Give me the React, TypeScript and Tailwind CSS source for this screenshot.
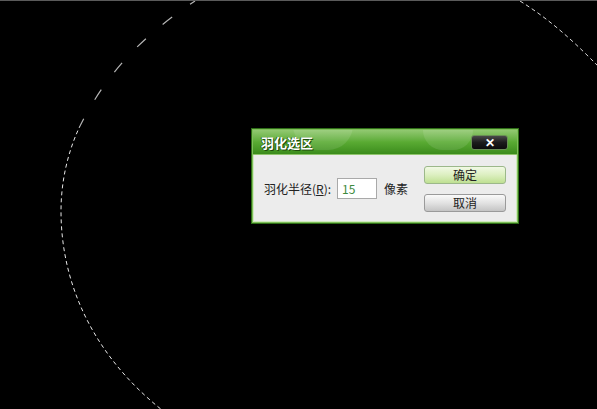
import React from 'react';

const FONT = { fontFamily: '"Noto Sans CJK SC", "Noto Sans", sans-serif' };

export default function App() {
  return (
    <div className="relative h-[409px] w-[597px] overflow-hidden border-t border-[#5a5a5a] bg-black" style={FONT}>
      {/* 选区蚂蚁线 */}
      <svg className="absolute inset-0" width="597" height="409" viewBox="0 0 597 409" fill="none">
        <path d="M 195 432 C 110 380, 61 300, 61 210 C 61 180, 68 150, 80 125" stroke="#e8e8e8" strokeWidth="1" strokeDasharray="4 3" />
        <path d="M 80 125 C 110 65, 150 30, 195 0" stroke="#b5b5b5" strokeWidth="1.2" strokeDasharray="12 22" strokeDashoffset="4" />
        <path d="M 520 0 C 560 25, 590 55, 640 110" stroke="#d8d8d8" strokeWidth="1" strokeDasharray="4 3" />
      </svg>

      {/* 羽化选区 对话框 */}
      <div className="absolute left-[251px] top-[127px] w-[268px] border border-[#2f6f17] bg-[#3f8f22] p-[1px] shadow-[0_0_0_1px_#7fbf5a_inset]">
        <div className="relative flex h-[24px] items-center justify-between overflow-hidden bg-gradient-to-b from-[#92c971] via-[#5aab33] to-[#3b8c1c] pl-[8px] pr-[9px]">
          <div className="absolute left-[40px] top-[-30px] h-[50px] w-[60px] rounded-full bg-white/10" />
          <div className="absolute left-[170px] top-[-20px] h-[40px] w-[50px] rounded-full bg-white/10" />
          <span className="relative text-[13px] font-bold leading-none text-white [text-shadow:1px_1px_0_#1d4d0c,-1px_0_0_#2b5f14]">羽化选区</span>
          <div className="relative flex h-[15px] w-[37px] items-center justify-center rounded-[3px] border border-[#6a8f55] bg-gradient-to-b from-[#4a4a4a] via-[#1c1c1c] to-[#0c0c0c]">
            <span className="text-[12px] font-bold leading-none text-white">✕</span>
          </div>
        </div>
        <div className="flex h-[68px] items-center justify-between border-t border-[#8fc46c] bg-[#ececec] pl-[11px] pr-[11px] shadow-[inset_1px_0_0_#cfe9bd,inset_-1px_0_0_#cfe9bd,inset_0_-1px_0_#cfe9bd]">
          <div className="flex items-center text-[12px] text-[#222]">
            <span>羽化半径(<span className="underline">R</span>):</span>
            <div className="ml-[6px] flex h-[21px] w-[40px] items-center border border-[#a9a9a9] bg-white pl-[4px] text-[12px] text-[#3d8a3d]">15</div>
            <span className="ml-[7px]">像素</span>
          </div>
          <div className="flex flex-col gap-[10px]">
            <button className="flex h-[18px] w-[82px] items-center justify-center rounded-[3px] border border-[#9cb88a] bg-gradient-to-b from-[#f1f9e4] via-[#dcefc0] to-[#bfe092] text-[12px] leading-none text-[#222]">确定</button>
            <button className="flex h-[18px] w-[82px] items-center justify-center rounded-[3px] border border-[#9a9a9a] bg-gradient-to-b from-[#fafafa] via-[#e2e2e2] to-[#c4c4c4] text-[12px] leading-none text-[#222]">取消</button>
          </div>
        </div>
      </div>
    </div>
  );
}
